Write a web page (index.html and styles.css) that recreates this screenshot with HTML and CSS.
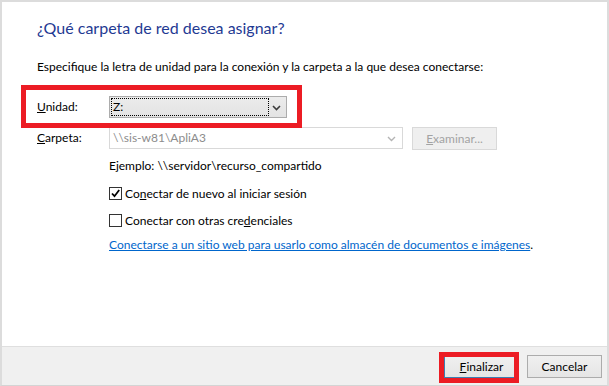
FILE: index.html
```html
<!DOCTYPE html>
<html lang="es">
<head>
<meta charset="utf-8">
<title>Conectar a unidad de red</title>
<link rel="stylesheet" href="styles.css">
</head>
<body>
<div class="window">
  <div class="content">
    <h1 class="title">¿Qué carpeta de red desea asignar?</h1>
    <p class="intro">Especifique la letra de unidad para la conexión y la carpeta a la que desea conectarse:</p>
    <div class="form">
      <div class="row">
        <span class="lbl"><u>U</u>nidad:</span>
        <div class="combo combo-drive">
          <span class="focus">Z:</span>
          <svg class="chev" width="9" height="6" viewBox="0 0 9 6"><path d="M1 1 L4.5 4.5 L8 1" fill="none" stroke="#3c3c3c" stroke-width="1.6"/></svg>
        </div>
      </div>
      <div class="row row-folder">
        <span class="lbl"><u>C</u>arpeta:</span>
        <div class="combo combo-folder">
          <span class="val">\\sis-w81\ApliA3</span>
          <svg class="chev" width="9" height="6" viewBox="0 0 9 6"><path d="M1 1 L4.5 4.5 L8 1" fill="none" stroke="#b4b4b4" stroke-width="1.4"/></svg>
        </div>
        <div class="btn btn-disabled"><u>E</u>xaminar...</div>
      </div>
    </div>
    <div class="details">
      <p class="example">Ejemplo: \\servidor\recurso_compartido</p>
      <div class="check">
        <span class="box"><svg width="11" height="11" viewBox="0 0 11 11"><path d="M2 5.5 L4.5 8.2 L9.2 2" fill="none" stroke="#000" stroke-width="1.8"/></svg></span>
        <span>Co<u>n</u>ectar de nuevo al iniciar sesión</span>
      </div>
      <div class="check">
        <span class="box"></span>
        <span>Conectar con otras cre<u>d</u>enciales</span>
      </div>
      <a class="link" href="#">Conectarse a un sitio web para usarlo como almacén de documentos e imágenes</a><span class="dot">.</span>
    </div>
  </div>
  <div class="footer">
    <div class="btn btn-default"><u>F</u>inalizar</div>
    <div class="btn">Cancelar</div>
  </div>
  <div class="mark mark-drive"></div>
  <div class="mark mark-finish"></div>
</div>
</body>
</html>
```
FILE: styles.css
```css
* { box-sizing: border-box; }
html, body { margin: 0; padding: 0; background: #fff; }
body { font-family: "Lato", "Liberation Sans", sans-serif; font-size: 12px; color: #000; }

.window {
  position: relative;
  width: 609px;
  height: 386px;
  border: 2px solid #dcdcdc;
  border-bottom: 1px solid #d4d4d4;
  display: flex;
  flex-direction: column;
}

.content {
  flex: 1;
  padding: 16px 0 0 35px;
  background: #fff;
}

.title {
  margin: 0;
  font-size: 16px;
  font-weight: normal;
  line-height: 20px;
  color: #1f3a93;
}

.intro {
  margin: 21px 0 0;
  line-height: 16px;
}

.form {
  margin-top: 21px;
  display: flex;
  flex-direction: column;
  gap: 9px;
}

.row {
  display: flex;
  align-items: flex-start;
  height: 22px;
}
.row-folder { height: 23px; }

.lbl {
  width: 72px;
  line-height: 22px;
}

.combo {
  position: relative;
  height: 22px;
  border: 1px solid #acacac;
  display: flex;
  align-items: center;
  line-height: 16px;
}
.combo .chev { position: absolute; top: 8px; }

.combo-drive {
  width: 178px;
  background: linear-gradient(#ececec, #e3e3e3);
  padding: 1px;
}
.combo-drive .focus {
  width: 158px;
  height: 18px;
  border: 1px dotted #000;
  padding-left: 1px;
  line-height: 16px;
}
.combo-drive .chev { right: 5px; }

.combo-folder {
  width: 294px;
  border-color: #d9d9d9;
  background: #fff;
  color: #8c8c8c;
  padding-left: 3px;
}
.combo-folder .chev { right: 6px; }

.btn {
  width: 75px;
  height: 23px;
  border: 1px solid #acacac;
  background: linear-gradient(#f0f0f0, #e5e5e5);
  display: flex;
  align-items: center;
  justify-content: center;
}
.btn-disabled {
  width: 85px;
  margin-left: 9px;
  border-color: #d9d9d9;
  background: #efefef;
  color: #a3a3a3;
}
.btn-default { border-color: #3c7fb1; }

.details {
  margin-left: 72px;
  margin-top: 8px;
}
.example { margin: 0; line-height: 16px; }

.check {
  display: flex;
  align-items: center;
  gap: 3px;
  height: 16px;
  margin-top: 11px;
}
.box {
  width: 13px;
  height: 13px;
  border: 1px solid #333;
  background: #fff;
  display: flex;
  align-items: center;
  justify-content: center;
}

.link {
  display: inline-block;
  margin-top: 9px;
  line-height: 16px;
  color: #0066cc;
  text-decoration: underline;
}
.dot { line-height: 16px; }

.footer {
  height: 39px;
  border-top: 1px solid #dfdfdf;
  background: #f0f0f0;
  display: flex;
  justify-content: flex-end;
  align-items: center;
  gap: 8px;
  padding: 1px 5px 0 0;
}

.mark {
  position: absolute;
  border: 5px solid #ec1c24;
}
.mark-drive { left: 19px; top: 83px; width: 281px; height: 43px; }
.mark-finish { left: 437px; top: 350px; width: 80px; height: 31px; }
```
